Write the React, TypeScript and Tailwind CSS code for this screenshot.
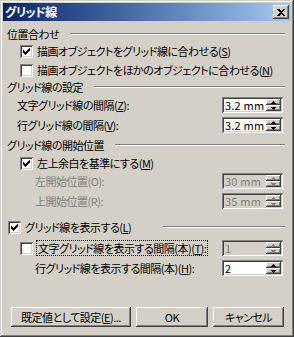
import React from "react";

const raised =
  "shadow-[inset_-1px_-1px_#404040,inset_1px_1px_#ffffff,inset_-2px_-2px_#808080,inset_2px_2px_#d4d0c8]";
const sunken =
  "shadow-[inset_1px_1px_#808080,inset_-1px_-1px_#ffffff,inset_2px_2px_#404040,inset_-2px_-2px_#d4d0c8]";

const Check: React.FC<{ checked?: boolean }> = ({ checked }) => (
  <div className={`w-[13px] h-[13px] bg-white flex items-center justify-center shrink-0 ${sunken}`}>
    {checked && (
      <svg width="7" height="7" viewBox="0 0 7 7" shapeRendering="crispEdges">
        <polygon points="0,2 2,4 7,-1 7,2 2,7 0,5" fill="#000" />
      </svg>
    )}
  </div>
);

const Arrow: React.FC<{ up?: boolean; disabled?: boolean }> = ({ up, disabled }) => (
  <div className={`flex-1 flex items-center justify-center bg-[#d4d0c8] ${raised}`}>
    <svg width="5" height="3" viewBox="0 0 5 3" shapeRendering="crispEdges">
      <polygon points={up ? "2.5,0 5,3 0,3" : "0,0 5,0 2.5,3"} fill={disabled ? "#808080" : "#000"} />
    </svg>
  </div>
);

const Spinner: React.FC<{ value: string; disabled?: boolean }> = ({ value, disabled }) => (
  <div
    className={`w-[61px] h-[16px] p-[2px] flex items-center shrink-0 ${sunken} ${disabled ? "bg-[#d4d0c8] text-[#808080]" : "bg-white text-black"}`}
  >
    <div className="flex-1 pl-[1px] leading-[12px] text-[11px] tracking-[0.2px] whitespace-nowrap">{value}</div>
    <div className="w-[15px] h-full flex flex-col">
      <Arrow up disabled={disabled} />
      <Arrow disabled={disabled} />
    </div>
  </div>
);

const Heading: React.FC<{ label: string; top?: string }> = ({ label, top }) => (
  <div className={`flex items-center pl-[4px] pr-[6px] ${top}`}>
    <span>{label}</span>
    <div className="flex-1 ml-[11px] h-[2px] border-t border-t-[#808080] border-b border-b-white" />
  </div>
);

const Btn: React.FC<{ w: string; children: React.ReactNode }> = ({ w, children }) => (
  <div className={`${w} h-[20px] flex items-center justify-center bg-[#d4d0c8] ${raised}`}>{children}</div>
);

export default function App() {
  return (
    <div
      className={`w-[294px] h-[337px] bg-[#d4d0c8] p-[3px] flex flex-col text-[11px] leading-[14px] tracking-[-0.5px] whitespace-nowrap text-black font-['Noto_Sans_CJK_JP',sans-serif] [font-feature-settings:'palt'] shadow-[inset_-1px_-1px_#404040,inset_1px_1px_#d4d0c8,inset_-2px_-2px_#808080,inset_2px_2px_#ffffff]`}
    >
      <div className="h-[18px] flex items-center justify-between bg-gradient-to-r from-[#0a246a] to-[#a6caf0] pl-[2px] pr-[2px]">
        <span className="text-white font-bold text-[12px] tracking-[-0.5px]">グリッド線</span>
        <div className={`w-[16px] h-[14px] bg-[#d4d0c8] flex items-center justify-center ${raised}`}>
          <svg width="8" height="7" viewBox="0 0 8 7" shapeRendering="crispEdges">
            <path d="M0 0h2l2 2 2-2h2l-3 3.5 3 3.5h-2l-2-2-2 2h-2l3-3.5z" fill="#000" />
          </svg>
        </div>
      </div>

      <div className="flex flex-col">
        <Heading label="位置合わせ" top="mt-[6px] h-[14px]" />
        <div className="h-[20px] flex items-center gap-[4px] pl-[17px]">
          <Check checked />
          <span>
            描画オブジェクトをグリッド線に合わせる(<u>S</u>)
          </span>
        </div>
        <div className="h-[18px] flex items-center gap-[4px] pl-[17px]">
          <Check />
          <span>
            描画オブジェクトをほかのオブジェクトに合わせる(<u>N</u>)
          </span>
        </div>

        <Heading label="グリッド線の設定" top="h-[16px]" />
        <div className="h-[20px] flex items-center justify-between pl-[14px] pr-[8px]">
          <span>
            文字グリッド線の間隔(<u>Z</u>):
          </span>
          <Spinner value="3.2 mm" />
        </div>
        <div className="h-[20px] flex items-center justify-between pl-[14px] pr-[8px]">
          <span>
            行グリッド線の間隔(<u>V</u>):
          </span>
          <Spinner value="3.2 mm" />
        </div>

        <Heading label="グリッド線の開始位置" top="h-[20px]" />
        <div className="h-[16px] flex items-center gap-[4px] pl-[17px]">
          <Check checked />
          <span>
            左上余白を基準にする(<u>M</u>)
          </span>
        </div>
        <div className="h-[20px] flex items-center justify-between pl-[32px] pr-[8px] text-[#808080]">
          <span>左開始位置(O):</span>
          <Spinner value="30 mm" disabled />
        </div>
        <div className="h-[20px] flex items-center justify-between pl-[32px] pr-[8px] text-[#808080]">
          <span>上開始位置(R):</span>
          <Spinner value="35 mm" disabled />
        </div>

        <div className="mt-[4px] h-[24px] flex items-center gap-[4px] pl-[5px] pr-[6px]">
          <Check checked />
          <span>
            グリッド線を表示する(<u>L</u>)
          </span>
          <div className="flex-1 ml-[28px] h-[2px] border-t border-t-[#808080] border-b border-b-white" />
        </div>
        <div className="h-[18px] flex items-center pl-[17px] pr-[8px]">
          <Check />
          <span className="ml-[3px] px-[1px] border border-dotted border-black">
            文字グリッド線を表示する間隔(本)(<u>T</u>):
          </span>
          <div className="flex-1" />
          <Spinner value="1" disabled />
        </div>
        <div className="h-[22px] flex items-center justify-between pl-[32px] pr-[8px]">
          <span>
            行グリッド線を表示する間隔(本)(<u>H</u>):
          </span>
          <Spinner value="2" />
        </div>

        <div className="mt-[28px] flex items-center pl-[8px] gap-[5px]">
          <Btn w="w-[120px]">
            既定値として設定(<u>E</u>)...
          </Btn>
          <Btn w="w-[72px]">OK</Btn>
          <Btn w="w-[71px]">キャンセル</Btn>
        </div>
      </div>
    </div>
  );
}
